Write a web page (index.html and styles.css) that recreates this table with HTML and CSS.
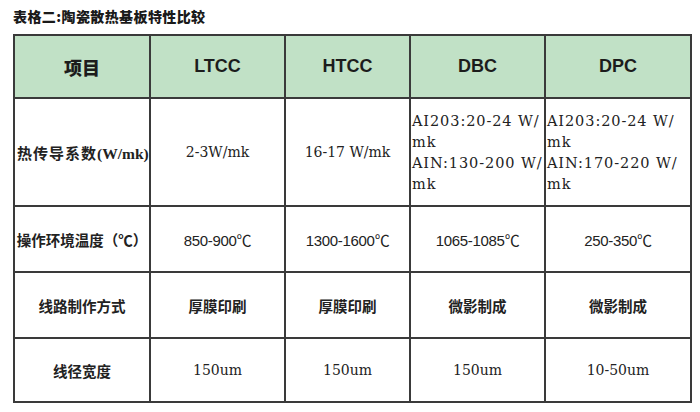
FILE: index.html
```html
<!DOCTYPE html>
<html lang="zh">
<head>
<meta charset="utf-8">
<title>表格二:陶瓷散热基板特性比较</title>
<link rel="stylesheet" href="styles.css">
</head>
<body>
<div class="page">
  <h1 class="title">表格二:陶瓷散热基板特性比较</h1>
  <table class="spec">
    <colgroup>
      <col class="c1"><col class="c2"><col class="c3"><col class="c4"><col class="c5">
    </colgroup>
    <thead>
      <tr class="r-head">
        <th class="cn-h">项目</th>
        <th>LTCC</th>
        <th>HTCC</th>
        <th>DBC</th>
        <th>DPC</th>
      </tr>
    </thead>
    <tbody>
      <tr class="r-k">
        <td class="lbl wide">热传导系数<span class="unit">(W/mk)</span></td>
        <td class="serif">2-3W/mk</td>
        <td class="serif">16-17 W/mk</td>
        <td class="serif multi">AI203:20-24 W/<br>mk<br>AIN:130-200 W/<br>mk</td>
        <td class="serif multi">AI203:20-24 W/<br>mk<br>AIN:170-220 W/<br>mk</td>
      </tr>
      <tr class="r-t">
        <td class="lbl">操作环境温度（℃）</td>
        <td class="sans">850-900℃</td>
        <td class="sans">1300-1600℃</td>
        <td class="sans">1065-1085℃</td>
        <td class="sans">250-350℃</td>
      </tr>
      <tr class="r-m">
        <td class="lbl">线路制作方式</td>
        <td class="lbl">厚膜印刷</td>
        <td class="lbl">厚膜印刷</td>
        <td class="lbl">微影制成</td>
        <td class="lbl">微影制成</td>
      </tr>
      <tr class="r-w">
        <td class="lbl">线径宽度</td>
        <td class="serif">150um</td>
        <td class="serif">150um</td>
        <td class="serif">150um</td>
        <td class="serif">10-50um</td>
      </tr>
    </tbody>
  </table>
</div>
</body>
</html>
```

FILE: styles.css
```css
html, body {
  margin: 0;
  padding: 0;
  background: #ffffff;
}

.page {
  width: 700px;
  height: 412px;
  padding: 6px 0 0 13px;
  box-sizing: border-box;
  color: #1e1e1e;
}

.title {
  margin: 0;
  font-family: "Noto Sans CJK SC", "Noto Sans", sans-serif;
  font-weight: 900;
  font-size: 14px;
  letter-spacing: 0.4px;
  line-height: 20px;
  color: #1a1a1a;
}

.spec {
  margin-top: 8px;
  border-collapse: collapse;
  table-layout: fixed;
  width: 677px;
}

.c1 { width: 136px; }
.c2 { width: 135px; }
.c3 { width: 125px; }
.c4 { width: 135px; }
.c5 { width: 146px; }

.spec th,
.spec td {
  border: 2px solid #3a3a3a;
  text-align: center;
  vertical-align: middle;
  padding: 0;
}

.spec th {
  background: #c1e1c6;
  font-family: "Liberation Sans", Arial, "Noto Sans CJK SC", sans-serif;
  font-weight: 700;
  font-size: 18px;
  color: #1c1c1c;
}

.spec th.cn-h {
  font-family: "Noto Sans CJK SC", sans-serif;
  font-weight: 900;
  font-size: 18px;
}

.r-head { height: 63px; }
.r-k { height: 108px; }
.r-t { height: 66px; }
.r-m { height: 66px; }
.r-w { height: 64px; }

.lbl {
  font-family: "Noto Sans CJK SC", sans-serif;
  font-weight: 600;
  font-size: 14.5px;
  color: #222;
}

.lbl.wide {
  font-size: 15px;
  letter-spacing: 1px;
  text-align: left;
  padding-left: 2px;
  white-space: nowrap;
}

.unit {
  font-family: "Liberation Serif", "Times New Roman", serif;
  font-weight: 700;
  font-size: 15.5px;
  letter-spacing: 0;
}

.serif {
  font-family: "DejaVu Serif", "Noto Sans CJK SC", serif;
  font-size: 14px;
  color: #222;
}

.sans {
  font-family: "Liberation Sans", Arial, "Noto Sans CJK SC", sans-serif;
  font-size: 15px;
  letter-spacing: -0.3px;
  color: #222;
}

.spec td.multi {
  text-align: left;
  padding-left: 1px;
  padding-top: 2px;
  font-size: 14.5px;
  letter-spacing: 0.9px;
  line-height: 21px;
  white-space: nowrap;
}
```
